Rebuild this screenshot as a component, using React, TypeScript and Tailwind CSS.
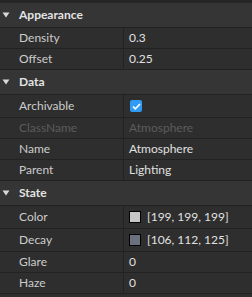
import React from "react";

type Row =
  | { kind: "header"; label: string }
  | { kind: "prop"; name: string; value?: string; dim?: boolean; check?: boolean; swatch?: string; tall?: boolean };

const rows: Row[] = [
  { kind: "header", label: "Appearance" },
  { kind: "prop", name: "Density", value: "0.3" },
  { kind: "prop", name: "Offset", value: "0.25" },
  { kind: "header", label: "Data" },
  { kind: "prop", name: "Archivable", check: true, tall: true },
  { kind: "prop", name: "ClassName", value: "Atmosphere", dim: true },
  { kind: "prop", name: "Name", value: "Atmosphere" },
  { kind: "prop", name: "Parent", value: "Lighting" },
  { kind: "header", label: "State" },
  { kind: "prop", name: "Color", value: "[199, 199, 199]", swatch: "#c7c7c7", tall: true },
  { kind: "prop", name: "Decay", value: "[106, 112, 125]", swatch: "#6a707d", tall: true },
  { kind: "prop", name: "Glare", value: "0" },
  { kind: "prop", name: "Haze", value: "0" },
];

function Header({ label }: { label: string }) {
  return (
    <div className="flex h-[25px] items-center border-b border-[#222222] bg-[#353535]">
      <div className="flex w-[19px] justify-center pl-[1px] pr-[8px]">
        <svg width="8" height="6" viewBox="0 0 8 6">
          <path d="M0.5 0.5h7L4 5.5z" fill="#d8d8d8" />
        </svg>
      </div>
      <span className="text-[12px] font-bold text-[#e3e3e3]">{label}</span>
    </div>
  );
}

function Prop({ row }: { row: Extract<Row, { kind: "prop" }> }) {
  return (
    <div className={`flex ${row.tall ? "h-[23px]" : "h-[21px]"} border-b border-[#222222] bg-[#2e2e2e]`}>
      <div
        className={`flex w-[124px] items-center border-r border-[#222222] pl-[19px] text-[12px] ${
          row.dim ? "text-[#5c5c5c]" : "text-[#cccccc]"
        }`}
      >
        {row.name}
      </div>
      <div className={`flex flex-1 items-center pl-[5px] text-[12px] ${row.dim ? "text-[#5c5c5c]" : "text-[#e0e0e0]"}`}>
        {row.check && (
          <div className="ml-[1px] flex h-[12px] w-[12px] items-center justify-center rounded-[2px] bg-[#2f9bf5]">
            <svg width="9" height="7" viewBox="0 0 9 7">
              <path d="M1 3.5l2.3 2.3L8 1" fill="none" stroke="#ffffff" strokeWidth="1.6" />
            </svg>
          </div>
        )}
        {row.swatch && (
          <div
            className="mr-[6px] h-[12px] w-[12px] border border-black"
            style={{ backgroundColor: row.swatch }}
          />
        )}
        {row.value}
      </div>
    </div>
  );
}

export default function App() {
  return (
    <div
      className="h-[297px] w-[252px] overflow-hidden border-t-[3px] border-[#262626] bg-[#2e2e2e]"
      style={{ fontFamily: "Lato, 'Noto Sans', sans-serif" }}
    >
      {rows.map((r, i) =>
        r.kind === "header" ? <Header key={i} label={r.label} /> : <Prop key={i} row={r} />
      )}
    </div>
  );
}
